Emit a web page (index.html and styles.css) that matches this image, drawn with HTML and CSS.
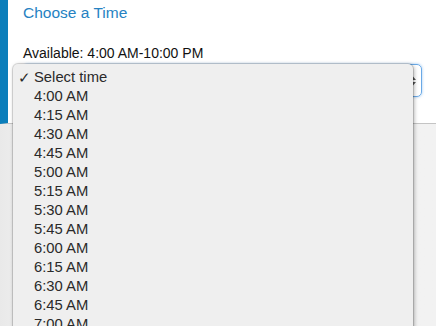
FILE: index.html
```html
<!DOCTYPE html>
<html lang="en">
<head>
    <meta charset="UTF-8">
    <meta name="viewport" content="width=device-width, initial-scale=1.0">
    <title>Choose a Time</title>
    <link rel="stylesheet" href="styles.css">
</head>
<body>

    <div class="panel">
        <div class="title">Choose a Time</div>
        <div class="available">Available: 4:00 AM-10:00 PM</div>
        <div class="select-box">
            <svg class="arrows" width="8" height="12" viewBox="0 0 8 12">
                <path d="M1 5 L4 1.5 L7 5 Z" fill="#555"/>
                <path d="M1 7 L4 10.5 L7 7 Z" fill="#555"/>
            </svg>
        </div>
    </div>

    <div class="menu">
        <div class="option selected"><span class="check">&#10003;</span>Select time</div>
        <div class="option">4:00 AM</div>
        <div class="option">4:15 AM</div>
        <div class="option">4:30 AM</div>
        <div class="option">4:45 AM</div>
        <div class="option">5:00 AM</div>
        <div class="option">5:15 AM</div>
        <div class="option">5:30 AM</div>
        <div class="option">5:45 AM</div>
        <div class="option">6:00 AM</div>
        <div class="option">6:15 AM</div>
        <div class="option">6:30 AM</div>
        <div class="option">6:45 AM</div>
        <div class="option">7:00 AM</div>
    </div>

</body>
</html>
```

FILE: styles.css
```css
body {
    font-family: "Liberation Sans", Arial, sans-serif;
    margin: 0;
    height: 100vh;
    overflow: hidden;
    background: linear-gradient(to right, #e9e9e9, #f1f1f1 30px, #f2f2f2);
    position: relative;
}

.panel {
    background-color: white;
    border-left: 8px solid #0b7ebb;
    border-bottom: 1px solid #c4c4c4;
    height: 124px;
    padding-left: 15px;
    box-sizing: border-box;
}

.title {
    color: #2582c2;
    font-size: 15.5px;
    padding-top: 4px;
    line-height: 18px;
}

.available {
    color: #111;
    font-size: 14px;
    line-height: 16px;
    margin-top: 23px;
}

.select-box {
    margin-top: 3px;
    width: 393px;
    height: 31px;
    border: 1px solid #6aa9e6;
    border-radius: 5px;
    box-shadow: 0 0 3px rgba(90, 160, 230, 0.6);
    display: flex;
    align-items: center;
    justify-content: flex-end;
    padding-right: 4px;
}

.arrows {
    display: block;
}

.menu {
    position: absolute;
    left: 13px;
    top: 64px;
    width: 400px;
    height: 300px;
    background-color: #efefef;
    border-radius: 5px 5px 0 0;
    box-shadow: 0 0 0 1px rgba(0, 0, 0, 0.12), 1px 1px 4px rgba(0, 0, 0, 0.35);
    padding-top: 4px;
    box-sizing: border-box;
}

.option {
    color: #2a2a2a;
    font-size: 14.8px;
    line-height: 19px;
    padding-left: 21px;
    position: relative;
}

.check {
    position: absolute;
    left: 5px;
    font-size: 15px;
}
```
